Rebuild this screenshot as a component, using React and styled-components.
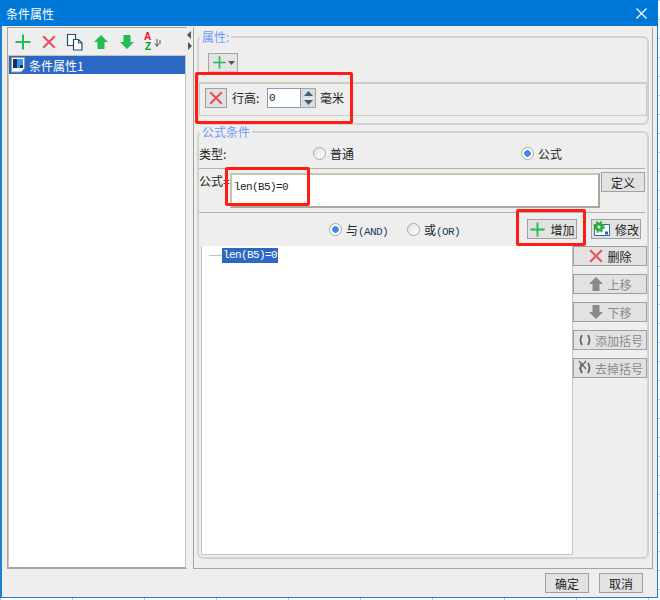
import React from 'react'
import styled, { createGlobalStyle } from 'styled-components'

const GlobalStyle = createGlobalStyle`
  html, body { margin: 0; padding: 0; background: #fff; }
  body { font-family: "Noto Sans CJK SC", "Liberation Sans", sans-serif; font-size: 12px; color: #222; }
`

const Sheet = styled.div`
  width: 660px;
  height: 600px;
  overflow: hidden;
  background-color: #fff;
  background-image:
    linear-gradient(#c9c9c9 1px, transparent 1px),
    linear-gradient(90deg, #c9c9c9 1px, transparent 1px);
  background-size: 72px 19px;
`

const Dialog = styled.div`
  position: relative;
  box-sizing: border-box;
  width: 658px;
  height: 598px;
  display: flex;
  flex-direction: column;
  background: #eeeeee;
  border: solid #1f7fd6;
  border-width: 0 1px 1px 2px;
`

const TitleBar = styled.div`
  height: 26px;
  flex: none;
  margin-left: -2px;
  margin-right: -1px;
  padding: 0 11px 0 6px;
  display: flex;
  align-items: center;
  justify-content: space-between;
  background: #0078d7;
  color: #fff;
`

const Main = styled.div`
  flex: none;
  height: 542px;
  padding: 1px 3px 0 5px;
  display: flex;
`

const LeftPane = styled.div`
  box-sizing: border-box;
  width: 180px;
  display: flex;
  flex-direction: column;
  border: 1px solid #a8a698;
  border-right-color: #eeeeee;
`

const Toolbar = styled.div`
  height: 27px;
  flex: none;
  padding-left: 6px;
  display: flex;
  align-items: center;
  gap: 8px;
`

const ToolIcon = styled.span`
  width: 18px;
  height: 18px;
  display: flex;
  align-items: center;
  justify-content: center;
  svg { display: block; }
`

const List = styled.div`
  flex: 1;
  background: #fff;
  border: 1px solid #c6c4b4;
  border-bottom: 1px solid #a8a698;
`

const ListRow = styled.div`
  height: 18px;
  padding-left: 2px;
  display: flex;
  align-items: center;
  gap: 3px;
  background: #2b68c4;
  color: #fff;
`

const Splitter = styled.div`
  width: 6px;
  flex: none;
  padding-top: 4px;
  display: flex;
  flex-direction: column;
  gap: 3px;
  svg { display: block; }
`

const RightPane = styled.div`
  box-sizing: border-box;
  width: 460px;
  padding: 3px 3px 0 3px;
  border: 1px solid #a8a698;
  border-top: 0;
`

const Group = styled.fieldset`
  box-sizing: border-box;
  margin: 0;
  padding: 0;
  min-width: 0;
  height: ${p => p.$height}px;
  border: 2px solid #d2d2d2;
  border-radius: 6px;
`

const GroupLabel = styled.legend`
  margin-left: 1px;
  padding: 0 2px;
  line-height: 14px;
  color: #6c9bf2;
`

const AddMenuButton = styled.div`
  box-sizing: border-box;
  width: 30px;
  height: 19px;
  margin: 9px 0 0 9px;
  display: flex;
  align-items: center;
  padding-left: 3px;
  gap: 1px;
  background: #e4e4e4;
  border: 1px solid #a5a5a5;
  border-bottom-color: #c8c8c8;
`

const AttrRow = styled.div`
  box-sizing: border-box;
  height: 34px;
  margin-top: 10px;
  padding: 4px 0 0 5px;
  display: flex;
  align-items: flex-start;
  border: 1px solid #cfccc0;
  border-top-width: 2px;
`

const IconSquare = styled.div`
  box-sizing: border-box;
  width: 22px;
  height: 20px;
  flex: none;
  display: flex;
  align-items: center;
  justify-content: center;
  background: #e2e2e2;
  border: 1px solid #9e9e9e;
`

const FieldLabel = styled.span`
  margin-left: ${p => p.$left || 0}px;
  width: ${p => p.$width ? `${p.$width}px` : 'auto'};
  line-height: 20px;
`

const SpinInput = styled.div`
  box-sizing: border-box;
  width: 34px;
  height: 20px;
  padding-left: 1px;
  background: #fff;
  border: 1px solid #7f9db9;
  font-family: "Liberation Mono", monospace;
  font-size: 11px;
  line-height: 18px;
`

const Spinner = styled.div`
  width: 15px;
  height: 20px;
  display: flex;
  flex-direction: column;
  gap: 1px;
  border: 1px solid #a5a5a5;
  border-left: 0;
  box-sizing: border-box;
`

const SpinPart = styled.div`
  flex: 1;
  display: flex;
  align-items: center;
  justify-content: center;
  background: #dcdcdc;
`

const TypeRow = styled.div`
  height: 29px;
  display: flex;
  align-items: center;
`

const TypeLabel = styled.span`
  width: 114px;
  flex: none;
`

const Option = styled.label`
  display: flex;
  align-items: center;
  gap: 4px;
  width: ${p => p.$width}px;
  flex: none;
  white-space: nowrap;
`

const RadioDot = styled.span`
  box-sizing: border-box;
  width: 13px;
  height: 13px;
  flex: none;
  border-radius: 50%;
  border: 1px solid #a6a6a6;
  background: ${p => p.$checked
    ? 'radial-gradient(circle, #3f86f0 0 3px, #fff 3.5px)'
    : 'linear-gradient(135deg, #e2e2e2, #fff)'};
`

const MonoText = styled.span`
  font-family: "Liberation Mono", monospace;
  font-size: 11px;
  letter-spacing: -0.6px;
`

const Latin = styled(MonoText)`
  color: #203a66;
`

const Divider = styled.div`
  height: 1px;
  background: #b4b2a6;
  margin-right: 2px;
`

const FormulaRow = styled.div`
  height: 43px;
  padding-top: 3px;
  box-sizing: border-box;
  display: flex;
  align-items: flex-start;
`

const FormulaLabel = styled.span`
  width: 31px;
  flex: none;
  line-height: 17px;
  white-space: nowrap;
`

const FormulaInput = styled(MonoText)`
  display: block;
  box-sizing: border-box;
  width: 370px;
  height: 35px;
  margin-top: 1px;
  padding: 5px 0 0 2px;
  background: #fff;
  border: 2px solid;
  border-color: #c6c4b4 #a8a698 #a8a698 #c6c4b4;
  line-height: 14px;
`

const Button = styled.div`
  box-sizing: border-box;
  width: ${p => p.$width || 44}px;
  height: 20px;
  flex: none;
  display: flex;
  align-items: center;
  justify-content: center;
  gap: ${p => p.$gap || 0}px;
  margin-left: ${p => p.$left || 0}px;
  background: #e2e2e2;
  border: 1px solid #a0a0a0;
  color: ${p => p.$disabled ? '#8a8a8a' : '#222'};
  white-space: nowrap;
`

const LogicRow = styled.div`
  height: 33px;
  padding: 6px 6px 0 130px;
  box-sizing: border-box;
  display: flex;
  align-items: flex-start;
`

const LogicOptions = styled.div`
  display: flex;
  height: 20px;
  flex: 1;
`

const ConditionArea = styled.div`
  display: flex;
  padding-left: 2px;
`

const Tree = styled.div`
  box-sizing: border-box;
  width: 372px;
  height: 309px;
  padding: 2px 0 0 7px;
  display: flex;
  align-items: flex-start;
  background: #fff;
  border: 1px solid #c6c4b4;
  border-top: 0;
`

const TreeLine = styled.span`
  width: 13px;
  height: 1px;
  margin-top: 7px;
  background: #c6c4b4;
`

const TreeText = styled(MonoText)`
  padding: 0 1px;
  background: #2b68c4;
  color: #fff;
  line-height: 15px;
`

const SideButtons = styled.div`
  display: flex;
  flex-direction: column;
  gap: 8px;
`

const Footer = styled.div`
  flex: 1;
  display: flex;
  justify-content: flex-end;
  gap: 10px;
  padding: 4px 14px 0 0;
`

const Highlight = styled.div`
  position: absolute;
  box-sizing: border-box;
  left: ${p => p.$x - 2}px;
  top: ${p => p.$y}px;
  width: ${p => p.$w}px;
  height: ${p => p.$h}px;
  border: 3px solid #ff1c14;
  border-radius: 2px;
  pointer-events: none;
`

const GREEN = '#22bb55'
const RED = '#e8505b'

function Plus({ size = 18 }) {
  return (
    <svg width={size} height={size} viewBox="0 0 18 18">
      <path d="M9 1.5v15M1.5 9h15" stroke={GREEN} strokeWidth="2" fill="none" />
    </svg>
  )
}

function Cross({ size = 16 }) {
  return (
    <svg width={size} height={size} viewBox="0 0 18 18">
      <path d="M2.5 2.5l13 13M15.500 2.500l-13 13" stroke={RED} strokeWidth="2.400" fill="none" />
    </svg>
  )
}

function CopyIcon() {
  return (
    <svg width="18" height="18" viewBox="0 0 18 18">
      <path d="M1.500 1.500h8v11h-8z" fill="#fff" stroke="#1d4f70" strokeWidth="1.200" />
      <path d="M7.500 6.500h5l3.500 3.500v7h-8.500z" fill="#fff" stroke="#1d4f70" strokeWidth="1.200" />
      <path d="M12.500 6.500v3.500h3.500" fill="none" stroke="#1d4f70" strokeWidth="1" />
    </svg>
  )
}

function ArrowUp({ color = GREEN }) {
  return (
    <svg width="16" height="16" viewBox="0 0 16 16">
      <path d="M8 1l7 7h-3.500v7h-7v-7h-3.500z" fill={color} />
    </svg>
  )
}

function ArrowDown({ color = GREEN }) {
  return (
    <svg width="16" height="16" viewBox="0 0 16 16">
      <path d="M8 15l7-7h-3.500v-7h-7v7h-3.500z" fill={color} />
    </svg>
  )
}

function SortIcon() {
  return (
    <svg width="18" height="19" viewBox="0 0 18 19">
      <text x="0" y="8" fontSize="10" fontWeight="700" fontFamily="Liberation Sans" fill="#e02020">A</text>
      <text x="1" y="18" fontSize="10" fontWeight="700" fontFamily="Liberation Sans" fill="#0a9a2a">Z</text>
      <path d="M13 7v7M11 11.500l2 3 2-3M16 8v4" stroke="#555" strokeWidth="1" fill="none" />
    </svg>
  )
}

function DocIcon() {
  return (
    <svg width="15" height="16" viewBox="0 0 15 16">
      <path d="M.5.5h13v11l-3.500 3.500h-9.500z" fill="#fff" stroke="#9a9a9a" />
      <path d="M2 2h10v9h-10z" fill="#1a2f5a" />
      <path d="M6 2h6v6h-3v3h-3z" fill="#2f9bea" />
    </svg>
  )
}

function ParenIcon({ crossed }) {
  return (
    <svg width="16" height="16" viewBox="0 0 16 16">
      <path d="M5 3q-3 5 0 10M11 3q3 5 0 10" stroke="#666" strokeWidth="1.800" fill="none" />
      {crossed && <path d="M2 1l7 8M9 1l-7 8" stroke="#666" strokeWidth="1.200" fill="none" />}
    </svg>
  )
}

function EditIcon() {
  return (
    <svg width="18" height="16" viewBox="0 0 18 16">
      <path d="M1.500 3.500h15v11h-15z" fill="#fff" stroke="#1d6fa8" />
      <circle cx="6" cy="6" r="3" fill="#fff" stroke="#2fae3f" strokeWidth="3" />
      <circle cx="6" cy="6" r="5" fill="none" stroke="#2fae3f" strokeWidth="1.600" strokeDasharray="2 2" />
      <path d="M12 10.500h3v3h-3z" fill="#1d6fa8" />
    </svg>
  )
}

function Radio({ checked, width, children }) {
  return (
    <Option $width={width}>
      <RadioDot $checked={checked} />
      <span>{children}</span>
    </Option>
  )
}

export default function App() {
  return (
    <Sheet>
      <GlobalStyle />
      <Dialog>
        <TitleBar>
          <span>条件属性</span>
          <svg width="11" height="11" viewBox="0 0 11 11">
            <path d="M.5.5l10 10M10.500.5l-10 10" stroke="#fff" strokeWidth="1.200" fill="none" />
          </svg>
        </TitleBar>
        <Main>
          <LeftPane>
            <Toolbar>
              <ToolIcon><Plus /></ToolIcon>
              <ToolIcon><Cross /></ToolIcon>
              <ToolIcon><CopyIcon /></ToolIcon>
              <ToolIcon><ArrowUp /></ToolIcon>
              <ToolIcon><ArrowDown /></ToolIcon>
              <ToolIcon><SortIcon /></ToolIcon>
            </Toolbar>
            <List>
              <ListRow>
                <DocIcon />
                <span>条件属性1</span>
              </ListRow>
            </List>
          </LeftPane>
          <Splitter>
            <svg width="5" height="8" viewBox="0 0 5 8"><path d="M4 0v8l-4-4z" fill="#555" /></svg>
            <svg width="5" height="8" viewBox="0 0 5 8"><path d="M1 0v8l4-4z" fill="#555" /></svg>
          </Splitter>
          <RightPane>
            <Group $height={95}>
              <GroupLabel>属性:</GroupLabel>
              <AddMenuButton>
                <Plus size={15} />
                <svg width="7" height="4" viewBox="0 0 7 4"><path d="M0 0h7l-3.500 4z" fill="#555" /></svg>
              </AddMenuButton>
              <AttrRow>
                <IconSquare><Cross /></IconSquare>
                <FieldLabel $left={5} $width={35}>行高:</FieldLabel>
                <SpinInput>0</SpinInput>
                <Spinner>
                  <SpinPart><svg width="9" height="5" viewBox="0 0 9 5"><path d="M4.500 0l4.500 5h-9z" fill="#3d5f7f" /></svg></SpinPart>
                  <SpinPart><svg width="9" height="5" viewBox="0 0 9 5"><path d="M4.500 5l4.500-5h-9z" fill="#3d5f7f" /></svg></SpinPart>
                </Spinner>
                <FieldLabel $left={4}>毫米</FieldLabel>
              </AttrRow>
            </Group>
            <Group $height={434}>
              <GroupLabel>公式条件</GroupLabel>
              <TypeRow>
                <TypeLabel>类型:</TypeLabel>
                <Radio width={208}>普通</Radio>
                <Radio checked width={60}>公式</Radio>
              </TypeRow>
              <Divider />
              <FormulaRow>
                <FormulaLabel>公式=</FormulaLabel>
                <FormulaInput>len(B5)=0</FormulaInput>
                <Button $left={1}>定义</Button>
              </FormulaRow>
              <Divider />
              <LogicRow>
                <LogicOptions>
                  <Radio checked width={78}>与<Latin>(AND)</Latin></Radio>
                  <Radio width={78}>或<Latin>(OR)</Latin></Radio>
                </LogicOptions>
                <Button $width={50} $gap={4}><Plus size={17} />增加</Button>
                <Button $width={50} $left={14} $gap={4}><EditIcon />修改</Button>
              </LogicRow>
              <ConditionArea>
                <Tree>
                  <TreeLine />
                  <TreeText>len(B5)=0</TreeText>
                </Tree>
                <SideButtons>
                  <Button $width={74} $gap={3}><Cross />删除</Button>
                  <Button $width={74} $gap={3} $disabled><ArrowUp color="#8a8a8a" />上移</Button>
                  <Button $width={74} $gap={3} $disabled><ArrowDown color="#8a8a8a" />下移</Button>
                  <Button $width={74} $gap={2} $disabled><ParenIcon />添加括号</Button>
                  <Button $width={74} $gap={2} $disabled><ParenIcon crossed />去掉括号</Button>
                </SideButtons>
              </ConditionArea>
            </Group>
          </RightPane>
        </Main>
        <Footer>
          <Button>确定</Button>
          <Button>取消</Button>
        </Footer>
        <Highlight $x={195} $y={72} $w={158} $h={52} />
        <Highlight $x={225} $y={167} $w={85} $h={39} />
        <Highlight $x={516} $y={209} $w={70} $h={37} />
      </Dialog>
    </Sheet>
  )
}
